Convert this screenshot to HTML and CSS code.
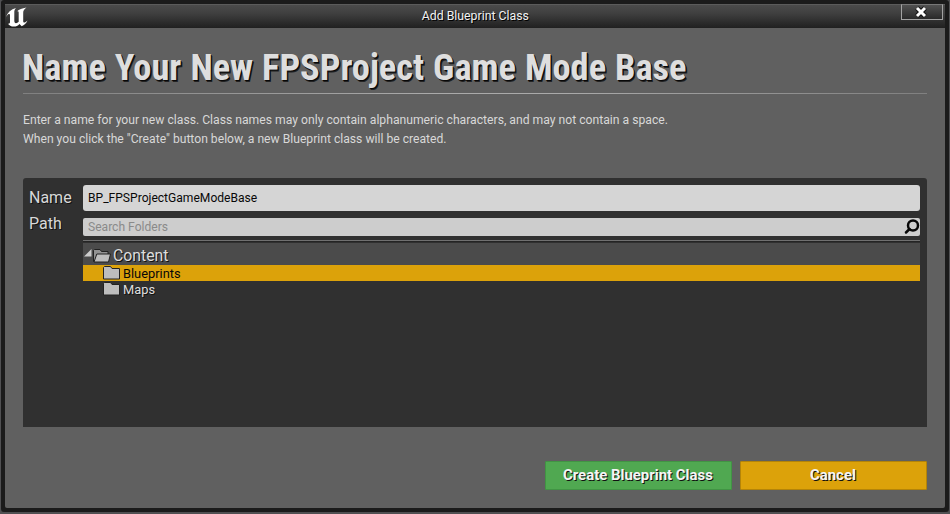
FILE: index.html
```
<!DOCTYPE html>
<html lang="en">
<head>
<meta charset="utf-8">
<title>Add Blueprint Class</title>
<link rel="stylesheet" href="styles.css">
</head>
<body>
<div class="window">
  <header class="titlebar">
    <svg class="logo" width="24" height="22" viewBox="0 0 24 22"><path d="M.8 11.500C2.500 6.500 6 3.300 11 2c-1.300 1.500-1.700 2.500-1.700 4v8.500c0 2 .6 2.700 1.700 2.700 1 0 1.800-.5 2.700-1.400V6.500c0-1-.6-1.500-1.500-1.300C14 3.500 17 2.300 21.500 1.500c-2.300 2-3.300 3.200-3.300 5.200v8.500c0 1 .7 1.500 1.500 1.200.8-.2 1.600-.8 2.800-1.900-1.200 3-3.300 4.500-5.800 5.700L14.500 18c-1.700 1.800-3.300 2.600-5.700 2.600-2.600 0-4.800-1-6-3.100 1.300.6 2.200-.2 2.200-1.500V9.300c0-1.100-.5-1.700-1.500-1.300C2.800 8.500 1.800 9.700.8 11.500z"/></svg>
    <div class="caption"><span class="fit fit-caption">Add Blueprint Class</span></div>
    <button class="close" aria-label="Close"><svg width="14" height="14" viewBox="0 0 14 14"><path class="x-edge" d="M3 3l8 8M11 3l-8 8"/><path class="x-face" d="M3 3l8 8M11 3l-8 8"/></svg></button>
  </header>
  <main class="body">
    <h1><span class="fit fit-title">Name Your New FPSProject Game Mode Base</span></h1>
    <div class="rule"></div>
    <div class="intro">
      <p><span class="fit fit-line1">Enter a name for your new class. Class names may only contain alphanumeric characters, and may not contain a space.</span></p>
      <p><span class="fit fit-line2">When you click the "Create" button below, a new Blueprint class will be created.</span></p>
    </div>
    <section class="panel">
      <div class="label"><span class="fit">Name</span></div>
      <div class="name-box"><span class="fit fit-value">BP_FPSProjectGameModeBase</span></div>
      <div class="label label-path"><span class="fit">Path</span></div>
      <div class="picker">
        <div class="search"><span class="fit fit-search">Search Folders</span>
          <svg width="17" height="17" viewBox="0 0 17 17"><circle cx="10" cy="7.500" r="5"/><path d="M6.500 11L3 14.500"/></svg>
        </div>
        <div class="separator"></div>
        <div class="row root">
          <svg class="arrow" width="8" height="8" viewBox="0 0 8 8"><path d="M7.500 0V7.500H0z"/></svg>
          <svg class="folder" width="20" height="16" viewBox="0 0 20 16"><path class="back" d="M1.500 13.500V2.500l1-1h5.500l1.500 2H16v3H5.500L3 13.500z"/><path class="front" d="M2 14L4.800 6h13.700l-2 8z"/></svg>
          <span class="fit fit-content">Content</span>
        </div>
        <div class="row child selected">
          <svg class="folder" width="20" height="16" viewBox="0 0 20 16"><path class="front" d="M1.500 14V2.500l1-1h6l1.500 2h7.500V14z"/></svg>
          <span class="fit fit-item">Blueprints</span>
        </div>
        <div class="row child">
          <svg class="folder" width="20" height="16" viewBox="0 0 20 16"><path class="front" d="M1.500 14V2.500l1-1h6l1.500 2h7.500V14z"/></svg>
          <span class="fit fit-item">Maps</span>
        </div>
      </div>
    </section>
    <footer>
      <button class="action create"><span class="fit fit-action">Create Blueprint Class</span></button>
      <button class="action cancel"><span class="fit fit-action">Cancel</span></button>
    </footer>
  </main>
</div>
</body>
</html>
```
FILE: styles.css
```
* { box-sizing: border-box; }
body { margin: 0; background: #505052; font-family: Roboto, "Liberation Sans", sans-serif; overflow: hidden; }
.window { width: 948px; height: 512px; margin-left: 1px; padding: 4px; background: #1b1b1b; border-radius: 3px 3px 4px 4px; box-shadow: 0 1px 0 #343434; }
h1, p { margin: 0; font-weight: normal; }
button { border: 0; padding: 0; font: inherit; }
.fit { display: inline-block; white-space: pre; transform-origin: 0 50%; }
.titlebar { display: grid; grid-template-columns: 72px 1fr 72px; height: 24px; background: linear-gradient(#4b4b4b, #404040 35%, #202020); border-top: 1px solid #5b5b5b; }
.logo { fill: #fff; margin-top: 1px; }
.caption { display: flex; justify-content: center; color: #f2f2f2; font-size: 12px; line-height: 22px; text-shadow: 1px 1px 0 #000; }
.fit-caption { transform: scaleX(1.025); transform-origin: 50% 50%; }
.close { display: flex; align-items: center; justify-content: center; width: 42px; height: 16px; margin: -1px 0 0 28px; background: linear-gradient(#515151, #292929); border: 1px solid #a2a2a2; border-top-color: #777; }
.close svg { flex: none; margin-right: 2px; }
.x-edge { stroke: #111; stroke-width: 5; }
.x-face { stroke: #fff; stroke-width: 3; }
.body { display: flex; flex-direction: column; height: 480px; padding: 0 18px; background: #606060; border-radius: 0 0 2px 2px; }
h1 { height: 65px; padding-top: 17px; color: #dedede; font-size: 36px; line-height: 46px; font-weight: 700; text-shadow: 1px 1px 0 #080808, 1.5px 1.5px 0 #222; }
.fit-title { font-stretch: 75%; word-spacing: .6px; margin-left: -1px; transform: scaleX(1.0105); }
.fit-line1 { transform: scaleX(1.0142); }
.fit-line2 { transform: scaleX(1.012); }
.fit-value { transform: scaleX(1.006); }
.fit-search { transform: scaleX(1.006); }
.fit-action { transform: scaleX(.995); }
.fit-content, .fit-item { transform: scaleX(.987); }
.rule { height: 1px; flex: none; background: linear-gradient(90deg, #808080, #aaa 45%, #aaa 60%, #808080); }
.intro { height: 84px; padding-top: 17px; color: #d8d8d8; font-size: 12px; line-height: 19px; }
.panel { display: grid; grid-template-columns: 54px 837px; grid-template-rows: 26px 1fr; row-gap: 7px; width: 904px; height: 249px; padding: 7px 6px; background: #303030; border-radius: 3px 3px 0 0; }
.label { color: #d8d8d8; font-size: 16px; line-height: 25px; text-shadow: 1px 1px 0 #111; }
.label-path { margin-top: -7px; }
.name-box { padding-left: 5px; border-radius: 3px; background: #d5d5d5; color: #080808; font-size: 12px; line-height: 26px; }
.search { display: flex; justify-content: space-between; height: 18px; padding-left: 5px; border-radius: 2px; background: #cdcdcd; color: #8a8a8a; font-size: 12px; line-height: 18px; }
.search svg { fill: none; stroke: #070707; stroke-width: 2.5; stroke-linecap: round; }
.separator { height: 2px; margin: 4px 0 1px; background: linear-gradient(#707070 50%, #242424 50%); }
.row { display: flex; height: 16px; color: #dedede; font-size: 13px; line-height: 17px; text-shadow: 1px 1px 0 #111; }
.root { height: 22px; padding-left: 1px; background: #4b4b4b; font-size: 16px; line-height: 25px; }
.root .folder { margin: 5px 1px 0 0; }
.arrow { margin-top: 6px; fill: #ccc; }
.child { padding-left: 19px; }
.child .folder { margin-right: 1px; }
.selected { background: #dca20a; color: #080808; text-shadow: none; }
.folder path { stroke: #222; stroke-width: 1; }
.folder .front { fill: #bdbdbd; }
.folder .back { fill: #929292; }
footer { display: flex; justify-content: flex-end; gap: 8px; margin-top: 34px; }
.action { width: 187px; height: 29px; color: #f5f5f5; font-size: 15px; line-height: 27px; font-weight: 700; text-shadow: 1px 1px 0 #111; border-radius: 1px; }
.create { background: #50a851; border: 1px solid #419444; }
.cancel { background: #dca20a; border: 1px solid #b48408; }
```
